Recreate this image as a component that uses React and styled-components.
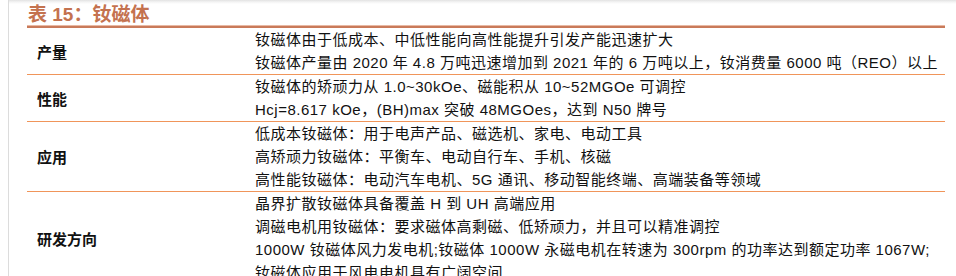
import styled, { createGlobalStyle } from "styled-components";

const rows = [
  {
    label: "产量",
    lines: [
      "钕磁体由于低成本、中低性能向高性能提升引发产能迅速扩大",
      "钕磁体产量由 2020 年 4.8 万吨迅速增加到 2021 年的 6 万吨以上，钕消费量 6000 吨（REO）以上",
    ],
  },
  {
    label: "性能",
    lines: [
      "钕磁体的矫顽力从 1.0~30kOe、磁能积从 10~52MGOe 可调控",
      "Hcj=8.617 kOe，(BH)max 突破 48MGOes，达到 N50 牌号",
    ],
  },
  {
    label: "应用",
    lines: [
      "低成本钕磁体：用于电声产品、磁选机、家电、电动工具",
      "高矫顽力钕磁体：平衡车、电动自行车、手机、核磁",
      "高性能钕磁体：电动汽车电机、5G 通讯、移动智能终端、高端装备等领域",
    ],
  },
  {
    label: "研发方向",
    lines: [
      "晶界扩散钕磁体具备覆盖 H 到 UH 高端应用",
      "调磁电机用钕磁体：要求磁体高剩磁、低矫顽力，并且可以精准调控",
      "1000W 钕磁体风力发电机;钕磁体 1000W 永磁电机在转速为 300rpm 的功率达到额定功率 1067W;",
      "钕磁体应用于风电电机具有广阔空间",
    ],
  },
];

export default function App() {
  return (
    <>
      <GlobalStyle />
      <Page>
        <Title>表 15：钕磁体</Title>
        <Table>
          {rows.map((row) => (
            <Row key={row.label}>
              <Label>{row.label}</Label>
              <Cell>
                {row.lines.map((line) => (
                  <Line key={line}>{line}</Line>
                ))}
              </Cell>
            </Row>
          ))}
        </Table>
      </Page>
    </>
  );
}

const GlobalStyle = createGlobalStyle`
  html, body {
    margin: 0;
    padding: 0;
    background: #fff;
    overflow: hidden;
  }
  body {
    font-family: "Liberation Sans", "Noto Sans CJK SC", sans-serif;
    color: #111;
  }
`;

const Page = styled.div`
  position: relative;
  margin-left: 8px;
  height: 276px;
  border-left: 1px solid #dcdcdc;
  padding: 4px 0 0 18px;
  box-sizing: border-box;
  overflow: hidden;
  background: linear-gradient(#e2e2e2, #f4f4f4 2px, #fff 4px);

  &::before {
    content: "";
    position: absolute;
    top: 0;
    left: -9px;
    width: 9px;
    height: 4px;
    background: linear-gradient(#e2e2e2, #fff);
  }
`;

const Title = styled.div`
  font-size: 19px;
  font-weight: 700;
  color: #c4724f;
  line-height: 22px;
  padding-left: 1px;
`;

const Table = styled.div`
  width: 918px;
  border-top: 2px solid #c97a5a;
  box-shadow: 0 -1px 0 #e8b9a4;
`;

const Row = styled.div`
  display: grid;
  grid-template-columns: 228px 1fr;
  align-items: center;
  border-bottom: 1px solid #f0955a;
`;

const Label = styled.div`
  padding-left: 10px;
  font-size: 15px;
  font-weight: 700;
  color: #111;
`;

const Cell = styled.div`
  display: flex;
  flex-direction: column;
`;

const Line = styled.div`
  font-size: 15px;
  line-height: 23px;
  letter-spacing: 0.5px;
  white-space: nowrap;
  color: #111;
`;
